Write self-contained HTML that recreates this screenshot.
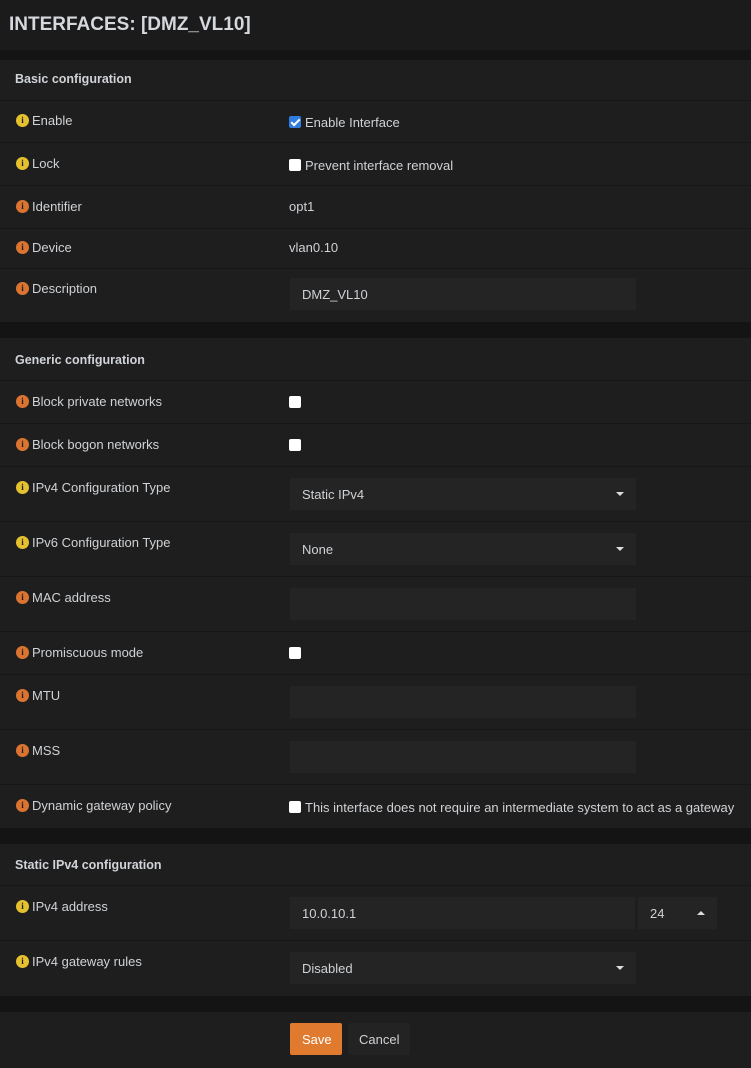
<!DOCTYPE html>
<html><head><meta charset="utf-8"><style>
*{box-sizing:border-box;margin:0;padding:0}
body{width:751px;height:1068px;background:#141414;font-family:"Liberation Sans",sans-serif;color:#cfd2d6;font-size:13px;position:relative;overflow:hidden}
.abs{position:absolute}
.title{left:0;top:0;width:751px;height:50px;background:#1b1b1b;font-size:19px;font-weight:bold;color:#d5d8dc;padding:14px 0 0 9px}
.panel{left:0;width:751px;background:#1e1e1e}
.hdr{position:absolute;left:15px;font-weight:bold;font-size:12.5px;color:#d0d3d7}
.line{position:absolute;left:0;width:751px;height:1px;background:#171717}
.lbl{position:absolute;left:16px;font-size:13px;color:#cfd2d6;white-space:nowrap;display:flex;align-items:center;height:16px}
.i{display:inline-block;width:13px;height:13px;border-radius:50%;color:#1e1e1e;font-size:9px;font-weight:bold;text-align:center;line-height:13px;margin-right:3px;font-family:"Liberation Serif",serif}
.y{background:#e6c12f}.o{background:#db7430}
.val{position:absolute;left:289px;font-size:13px;color:#cfd2d6;white-space:nowrap}
.in{position:absolute;left:290px;width:346px;height:32px;background:#242424;padding:9px 12px;font-size:13px;color:#cfd2d6}
.car{position:absolute;right:12px;top:14px;width:0;height:0;border-left:4px solid transparent;border-right:4px solid transparent;border-top:4px solid #ddd}
.cb{display:inline-block;width:12px;height:12px;background:#fff;border-radius:2px;vertical-align:-1px;margin-right:4px}
.cb.on{background:#2f7de1;position:relative}
.cb.on::after{content:"";position:absolute;left:4px;top:1px;width:3px;height:7px;border:solid #fff;border-width:0 2px 2px 0;transform:rotate(45deg)}
</style></head><body>
<div class="abs title">INTERFACES: [DMZ_VL10]</div>

<div class="abs panel" style="top:60px;height:262px"></div>
<div class="hdr" style="top:72px">Basic configuration</div>
<div class="line" style="top:100px"></div>
<div class="lbl" style="top:112px"><span class="i y">i</span>Enable</div>
<div class="val" style="top:115px"><span class="cb on"></span>Enable Interface</div>
<div class="line" style="top:142px"></div>
<div class="lbl" style="top:155px"><span class="i y">i</span>Lock</div>
<div class="val" style="top:158px"><span class="cb"></span>Prevent interface removal</div>
<div class="line" style="top:185px"></div>
<div class="lbl" style="top:198px"><span class="i o">i</span>Identifier</div>
<div class="val" style="top:199px">opt1</div>
<div class="line" style="top:228px"></div>
<div class="lbl" style="top:239px"><span class="i o">i</span>Device</div>
<div class="val" style="top:240px">vlan0.10</div>
<div class="line" style="top:268px"></div>
<div class="lbl" style="top:280px"><span class="i o">i</span>Description</div>
<div class="in" style="top:278px">DMZ_VL10</div>

<div class="abs panel" style="top:338px;height:490px"></div>
<div class="hdr" style="top:353px">Generic configuration</div>
<div class="line" style="top:380px"></div>
<div class="lbl" style="top:393px"><span class="i o">i</span>Block private networks</div>
<div class="val" style="top:395px"><span class="cb"></span></div>
<div class="line" style="top:423px"></div>
<div class="lbl" style="top:436px"><span class="i o">i</span>Block bogon networks</div>
<div class="val" style="top:438px"><span class="cb"></span></div>
<div class="line" style="top:466px"></div>
<div class="lbl" style="top:479px"><span class="i y">i</span>IPv4 Configuration Type</div>
<div class="in" style="top:478px">Static IPv4<span class="car"></span></div>
<div class="line" style="top:521px"></div>
<div class="lbl" style="top:534px"><span class="i y">i</span>IPv6 Configuration Type</div>
<div class="in" style="top:533px">None<span class="car"></span></div>
<div class="line" style="top:576px"></div>
<div class="lbl" style="top:589px"><span class="i o">i</span>MAC address</div>
<div class="in" style="top:588px"></div>
<div class="line" style="top:631px"></div>
<div class="lbl" style="top:644px"><span class="i o">i</span>Promiscuous mode</div>
<div class="val" style="top:646px"><span class="cb"></span></div>
<div class="line" style="top:674px"></div>
<div class="lbl" style="top:687px"><span class="i o">i</span>MTU</div>
<div class="in" style="top:686px"></div>
<div class="line" style="top:729px"></div>
<div class="lbl" style="top:742px"><span class="i o">i</span>MSS</div>
<div class="in" style="top:741px"></div>
<div class="line" style="top:784px"></div>
<div class="lbl" style="top:797px"><span class="i o">i</span>Dynamic gateway policy</div>
<div class="val" style="top:800px"><span class="cb"></span>This interface does not require an intermediate system to act as a gateway</div>

<div class="abs panel" style="top:844px;height:152px"></div>
<div class="hdr" style="top:858px">Static IPv4 configuration</div>
<div class="line" style="top:885px"></div>
<div class="lbl" style="top:898px"><span class="i y">i</span>IPv4 address</div>
<div class="in" style="top:897px;width:345px">10.0.10.1</div>
<div class="in" style="top:897px;left:638px;width:79px">24<span style="position:absolute;right:12px;top:14px;width:0;height:0;border-left:4px solid transparent;border-right:4px solid transparent;border-bottom:4px solid #ddd"></span></div>
<div class="line" style="top:940px"></div>
<div class="lbl" style="top:953px"><span class="i y">i</span>IPv4 gateway rules</div>
<div class="in" style="top:952px">Disabled<span class="car"></span></div>

<div class="abs panel" style="top:1012px;height:56px"></div>
<div class="abs" style="left:290px;top:1023px;width:52px;height:32px;background:#e07a2e;border-radius:2px;color:#fff;padding:9px 0 0 12px">Save</div>
<div class="abs" style="left:348px;top:1023px;width:62px;height:32px;background:#232323;border-radius:2px;color:#cfd2d6;padding:9px 0 0 11px">Cancel</div>
</body></html>
